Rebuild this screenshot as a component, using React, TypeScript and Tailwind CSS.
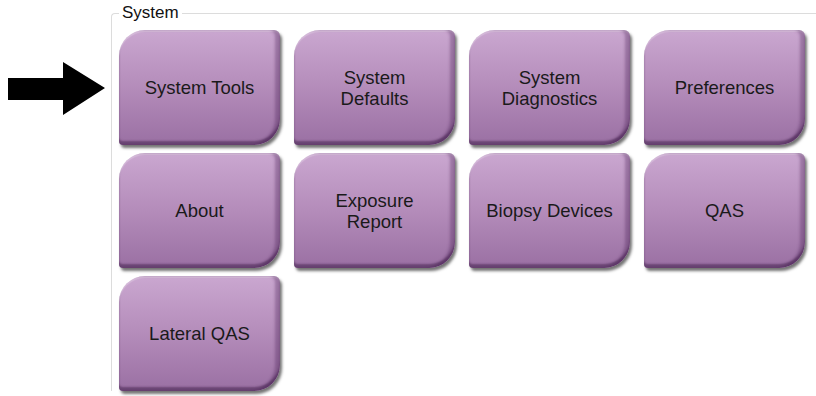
import React from 'react';

const buttons: string[][] = [
  ['System Tools'],
  ['System', 'Defaults'],
  ['System', 'Diagnostics'],
  ['Preferences'],
  ['About'],
  ['Exposure', 'Report'],
  ['Biopsy Devices'],
  ['QAS'],
  ['Lateral QAS'],
];

const MenuButton: React.FC<{ lines: string[] }> = ({ lines }) => (
  <button
    type="button"
    className="flex h-[115px] w-[161px] flex-col items-center justify-center rounded-tl-[26px] rounded-tr-[6px] rounded-br-[26px] rounded-bl-[4px] bg-gradient-to-b from-[#caa7d0] via-[#b48cba] to-[#9a70a3] text-[18.5px] leading-[21px] text-[#1a1a1a] shadow-[inset_-5px_0_3px_rgba(70,30,80,0.35),inset_0_-4px_2px_rgba(60,25,70,0.5),inset_0_2px_1px_rgba(255,255,255,0.25),2px_3px_3px_rgba(0,0,0,0.55)]"
    style={{ fontFamily: '"Liberation Sans", Arial, sans-serif' }}
  >
    {lines.map((l) => (
      <span key={l}>{l}</span>
    ))}
  </button>
);

export default function App() {
  return (
    <div
      className="flex h-[396px] w-[816px] items-start overflow-hidden bg-white"
      style={{ fontFamily: '"Liberation Sans", Arial, sans-serif' }}
    >
      {/* pointer arrow */}
      <div className="w-[111px] shrink-0 pl-[8px] pt-[62px]">
        <svg width="97" height="53" viewBox="0 0 97 53">
          <polygon points="0,16 55,16 55,0 97,26 55,53 55,38 0,38" fill="#000" />
        </svg>
      </div>

      {/* System group */}
      <fieldset className="mt-[3px] flex-1 rounded-tl-[4px] border-l border-t border-[#dcdcdc] pl-[7px] pt-[7px]">
        <legend className="px-[3px] text-[17px] leading-[20px] text-[#111]">System</legend>
        <div className="grid grid-cols-[repeat(4,161px)] gap-x-[14px] gap-y-[8px]">
          {buttons.map((b) => (
            <MenuButton key={b.join(' ')} lines={b} />
          ))}
        </div>
      </fieldset>
    </div>
  );
}
